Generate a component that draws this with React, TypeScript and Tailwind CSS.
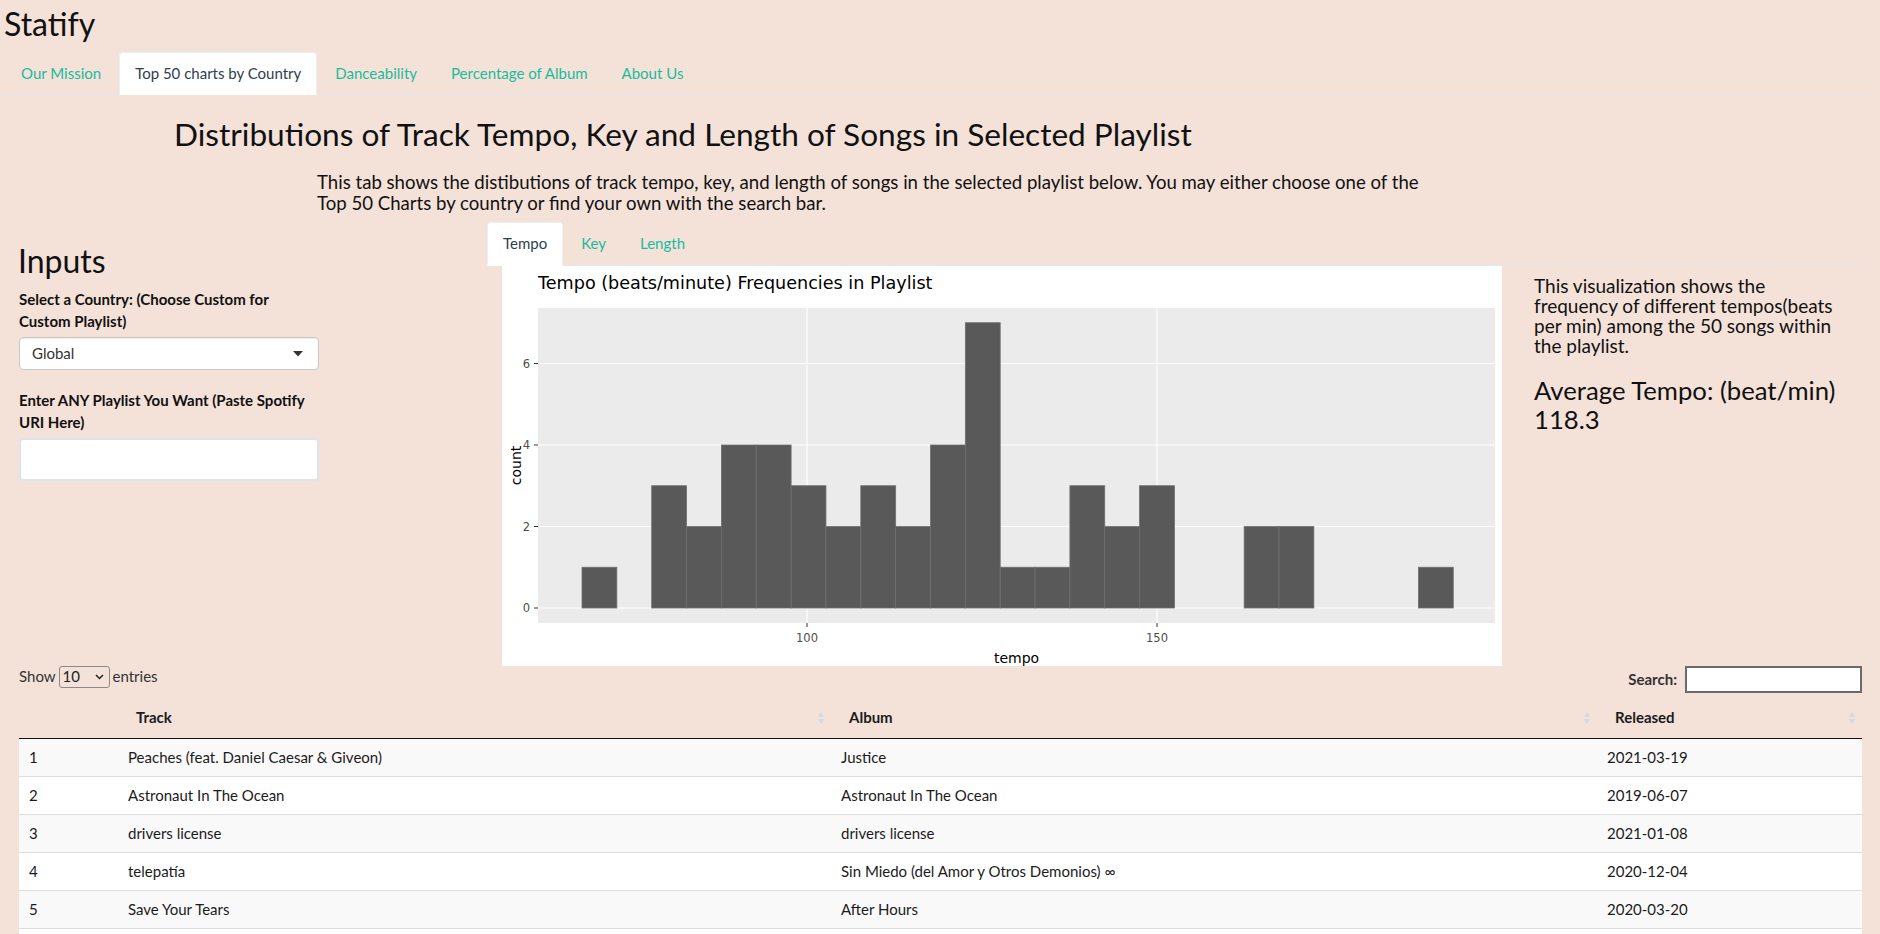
import React from "react";

const topTabs = [
  { label: "Our Mission", active: false },
  { label: "Top 50 charts by Country", active: true },
  { label: "Danceability", active: false },
  { label: "Percentage of Album", active: false },
  { label: "About Us", active: false },
];

const plotTabs = [
  { label: "Tempo", active: true },
  { label: "Key", active: false },
  { label: "Length", active: false },
];

// counts per tempo bin (ggplot default bins)
const bins = [1, 0, 3, 2, 4, 4, 3, 2, 3, 2, 4, 7, 1, 1, 3, 2, 3, 0, 0, 2, 2, 0, 0, 0, 1];

const rows = [
  ["1", "Peaches (feat. Daniel Caesar & Giveon)", "Justice", "2021-03-19"],
  ["2", "Astronaut In The Ocean", "Astronaut In The Ocean", "2019-06-07"],
  ["3", "drivers license", "drivers license", "2021-01-08"],
  ["4", "telepatía", "Sin Miedo (del Amor y Otros Demonios) ∞", "2020-12-04"],
  ["5", "Save Your Tears", "After Hours", "2020-03-20"],
  ["6", "Leave The Door Open", "Leave The Door Open", "2021-03-05"],
  ["7", "Blinding Lights", "After Hours", "2020-03-20"],
  ["8", "Levitating (feat. DaBaby)", "Future Nostalgia", "2020-03-27"],
  ["9", "Up", "Up", "2021-02-05"],
  ["10", "Without You", "Without You", "2020-11-13"],
];

function SortIcon() {
  return (
    <svg width="8" height="14" viewBox="0 0 8 14" className="absolute right-[6px] top-1/2 -translate-y-1/2">
      <path d="M4 1 L7.5 6 L0.5 6 Z" fill="#d3dae3" />
      <path d="M4 13 L7.5 8 L0.5 8 Z" fill="#d3dae3" />
    </svg>
  );
}

function TempoChart() {
  const binLeft = 80;
  const binW = 34.85;
  const zeroY = 342;
  const unit = 40.75;
  const yTicks = [0, 2, 4, 6];
  const xTicks = [
    { v: "100", x: 305 },
    { v: "150", x: 655 },
  ];
  return (
    <svg width="1000" height="400" viewBox="0 0 1000 400" className="block">
      <text x="36" y="23" fontFamily="DejaVu Sans, Verdana, sans-serif" fontSize="17.6" fill="#000">
        Tempo (beats/minute) Frequencies in Playlist
      </text>
      <rect x="36" y="42" width="957" height="315" fill="#ebebeb" />
      {yTicks.map((t) => (
        <line key={t} x1="36" x2="993" y1={zeroY - t * unit} y2={zeroY - t * unit} stroke="#fff" strokeWidth="1.1" />
      ))}
      {xTicks.map((t) => (
        <line key={t.v} x1={t.x} x2={t.x} y1="42" y2="357" stroke="#fff" strokeWidth="1.1" />
      ))}
      {bins.map((c, i) =>
        c > 0 ? (
          <rect
            key={i}
            x={binLeft + i * binW}
            y={zeroY - c * unit}
            width={binW}
            height={c * unit}
            fill="#595959"
            stroke="#6f6f6f"
            strokeWidth="0.8"
          />
        ) : null
      )}
      {yTicks.map((t) => (
        <g key={t}>
          <line x1="32" x2="36" y1={zeroY - t * unit} y2={zeroY - t * unit} stroke="#333" strokeWidth="1" />
          <text
            x="28"
            y={zeroY - t * unit + 4}
            textAnchor="end"
            fontFamily="DejaVu Sans, Verdana, sans-serif"
            fontSize="11.5"
            fill="#4d4d4d"
          >
            {t}
          </text>
        </g>
      ))}
      {xTicks.map((t) => (
        <g key={t.v}>
          <line x1={t.x} x2={t.x} y1="357" y2="361" stroke="#333" strokeWidth="1" />
          <text
            x={t.x}
            y="376"
            textAnchor="middle"
            fontFamily="DejaVu Sans, Verdana, sans-serif"
            fontSize="11.5"
            fill="#4d4d4d"
          >
            {t.v}
          </text>
        </g>
      ))}
      <text x="514.5" y="397" textAnchor="middle" fontFamily="DejaVu Sans, Verdana, sans-serif" fontSize="14" fill="#000">
        tempo
      </text>
      <text
        x="14"
        y="199.5"
        textAnchor="middle"
        dominantBaseline="central"
        transform="rotate(-90 14 199.5)"
        fontFamily="DejaVu Sans, Verdana, sans-serif"
        fontSize="14"
        fill="#000"
      >
        count
      </text>
    </svg>
  );
}

export default function App() {
  return (
    <div className="min-h-screen bg-[#f4e2d9] font-['Lato',sans-serif] text-[15px] leading-[21.4px] text-[#1b1b1b]">
      {/* Title + top nav */}
      <div className="px-[5px]">
        <div className="pt-[6px] text-[32px] leading-[35px] text-[#111] -ml-[1px]">Statify</div>
        <div className="mt-[11px] flex border-b border-[#e4e7ea]">
          {topTabs.map((t) => (
            <div
              key={t.label}
              className={
                t.active
                  ? "-mb-px mr-[2px] rounded-t-[4px] border border-[#ecf0f1] border-b-white bg-white px-[15px] py-[10px] text-[#2c3e50]"
                  : "-mb-px mr-[2px] border border-transparent px-[15px] py-[10px] text-[#18bc9c]"
              }
            >
              {t.label}
            </div>
          ))}
        </div>
      </div>

      {/* Heading */}
      <div className="mt-[22px] pl-[174px] text-[31.6px] leading-[35px] text-[#111]">
        Distributions of Track Tempo, Key and Length of Songs in Selected Playlist
      </div>
      <div className="mt-[20px] pl-[317px] text-[18.6px] leading-[20.5px] text-[#111]">
        <div className="whitespace-nowrap">
          This tab shows the distibutions of track tempo, key, and length of songs in the selected playlist below. You may either choose one of the
        </div>
        <div className="whitespace-nowrap">Top 50 Charts by country or find your own with the search bar.</div>
      </div>

      {/* Sidebar + main panel */}
      <div className="mt-[9px] flex">
        <div className="ml-[19px] w-[300px] shrink-0">
          <div className="mt-[21px] -ml-[1px] text-[32px] leading-[35px] text-[#111]">Inputs</div>
          <div className="mt-[11px] font-bold text-[#111]">
            Select a Country: (Choose Custom for
            <br />
            Custom Playlist)
          </div>
          <div className="mt-[5px] flex h-[33px] items-center justify-between rounded-[4px] border border-[#c9c9c9] bg-white pl-[12px] pr-[15px] text-[#333] shadow-[inset_0_1px_1px_rgba(0,0,0,0.08)]">
            <span>Global</span>
            <svg width="10" height="6" viewBox="0 0 10 6">
              <path d="M0 0 L10 0 L5 5.5 Z" fill="#333" />
            </svg>
          </div>
          <div className="mt-[20px] font-bold text-[#111]">
            Enter ANY Playlist You Want (Paste Spotify
            <br />
            URI Here)
          </div>
          <div className="mt-[5px] h-[43px] rounded-[4px] border-2 border-[#dce4ec] bg-white" />
        </div>

        <div className="ml-[168px] mr-[18px] flex-1">
          <div className="flex border-b border-[#e4e7ea]">
            {plotTabs.map((t) => (
              <div
                key={t.label}
                className={
                  t.active
                    ? "-mb-px mr-[2px] rounded-t-[4px] border border-[#ecf0f1] border-b-white bg-white px-[15px] py-[10px] text-[#2c3e50]"
                    : "-mb-px mr-[2px] border border-transparent px-[15px] py-[10px] text-[#18bc9c]"
                }
              >
                {t.label}
              </div>
            ))}
          </div>
          <div className="flex">
            <div className="w-[1032px] shrink-0 pl-[15px]">
              <div className="h-[400px] w-[1000px] bg-white">
                <TempoChart />
              </div>
            </div>
            <div className="flex-1 pl-[15px] text-[#111]">
              <div className="mt-[10px] text-[19px] leading-[20px]">
                This visualization shows the
                <br />
                frequency of different tempos(beats
                <br />
                per min) among the 50 songs within
                <br />
                the playlist.
              </div>
              <div className="mt-[20px] text-[25.7px] leading-[29px]">
                Average Tempo: (beat/min)
                <br />
                118.3
              </div>
            </div>
          </div>
        </div>
      </div>

      {/* Data table */}
      <div className="ml-[19px] mr-[18px]">
        <div className="flex h-[28px] items-start justify-between">
          <div className="flex h-[22px] items-center gap-[3px] text-[#333]">
            <span>Show</span>
            <div className="flex h-[22px] w-[51px] items-center justify-between rounded-[3px] border border-[#8a8a8a] bg-transparent pl-[3px] pr-[5px] text-[#222]">
              <span>10</span>
              <svg width="9" height="6" viewBox="0 0 9 6">
                <path d="M1 1 L4.5 4.5 L8 1" fill="none" stroke="#222" strokeWidth="1.5" />
              </svg>
            </div>
            <span>entries</span>
          </div>
          <div className="flex items-center gap-[8px] text-[#333]">
            <span className="font-bold">Search:</span>
            <div className="h-[27px] w-[177px] border-2 border-[#6b6b6b] bg-white" />
          </div>
        </div>
        <table className="mt-[3px] w-full border-collapse text-left text-[#1b1b1b]">
          <colgroup>
            <col className="w-[99px]" />
            <col className="w-[713px]" />
            <col className="w-[766px]" />
            <col className="w-[265px]" />
          </colgroup>
          <thead>
            <tr className="border-b border-[#111]">
              <th className="px-[18px] py-[10px] font-bold"></th>
              <th className="relative px-[18px] py-[10px] font-bold">
                Track
                <SortIcon />
              </th>
              <th className="relative px-[18px] py-[10px] font-bold">
                Album
                <SortIcon />
              </th>
              <th className="relative px-[18px] py-[10px] font-bold">
                Released
                <SortIcon />
              </th>
            </tr>
          </thead>
          <tbody>
            {rows.map((r, i) => (
              <tr key={r[0]} className={i % 2 === 0 ? "border-t border-[#dddddd] bg-[#f9f9f9] first:border-t-0" : "border-t border-[#dddddd] bg-white"}>
                {r.map((c, j) => (
                  <td key={j} className="px-[10px] py-[8px] leading-[21px] font-normal">
                    {c}
                  </td>
                ))}
              </tr>
            ))}
          </tbody>
        </table>
      </div>
    </div>
  );
}
